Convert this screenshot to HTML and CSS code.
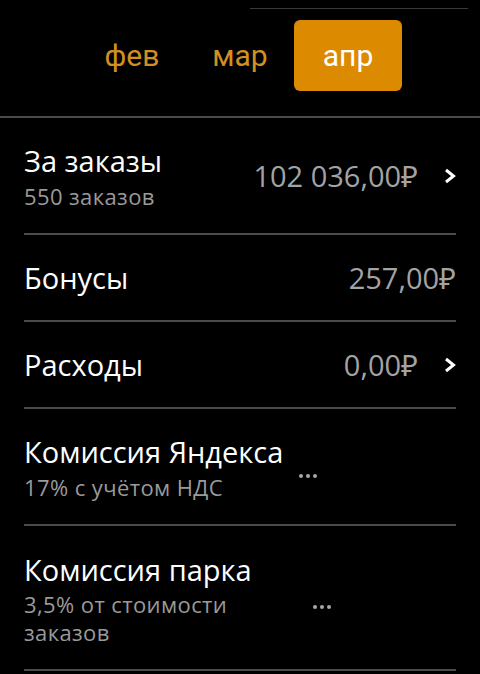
FILE: index.html
```html
<!DOCTYPE html>
<html lang="ru">
<head>
    <meta charset="UTF-8">
    <title>Доходы</title>
    <link rel="stylesheet" href="styles.css">
</head>
<body>
    <div class="top-line"></div>

    <!-- Месяцы -->
    <div class="months">
        <div class="month">фев</div>
        <div class="month">мар</div>
        <div class="month active">апр</div>
    </div>

    <div class="list">
        <div class="row row-big">
            <div class="info">
                <div class="title">За заказы</div>
                <div class="sub">550 заказов</div>
            </div>
            <div class="value">102 036,00₽</div>
            <svg class="chevron" width="12" height="16" viewBox="0 0 12 16"><polyline points="2,2 9.5,8 2,14" fill="none" stroke="#fff" stroke-width="3"/></svg>
        </div>
        <div class="row">
            <div class="info">
                <div class="title">Бонусы</div>
            </div>
            <div class="value">257,00₽</div>
        </div>
        <div class="row">
            <div class="info">
                <div class="title">Расходы</div>
            </div>
            <div class="value">0,00₽</div>
            <svg class="chevron" width="12" height="16" viewBox="0 0 12 16"><polyline points="2,2 9.5,8 2,14" fill="none" stroke="#fff" stroke-width="3"/></svg>
        </div>
        <div class="row row-big">
            <div class="info info-yandex">
                <div class="title">Комиссия Яндекса</div>
                <div class="sub">17% с учётом НДС</div>
            </div>
            <div class="dots"><span></span><span></span><span></span></div>
        </div>
        <div class="row row-park">
            <div class="info info-park">
                <div class="title">Комиссия парка</div>
                <div class="sub sub-narrow">3,5% от стоимости заказов</div>
            </div>
            <div class="dots"><span></span><span></span><span></span></div>
        </div>
    </div>
</body>
</html>
```

FILE: styles.css
```css
body {
    margin: 0;
    background: #000;
    color: #fff;
    font-family: "Open Sans", "Noto Sans", sans-serif;
}
.top-line {
    margin: 8px 0 0 250px;
    width: 218px;
    height: 1px;
    background: #3a3a3a;
}
.months {
    display: flex;
    justify-content: flex-end;
    padding-right: 78px;
    margin-top: 11px;
    padding-bottom: 25px;
    border-bottom: 2px solid #4b4b4b;
}
.month {
    width: 108px;
    height: 71px;
    display: flex;
    align-items: center;
    justify-content: center;
    font-family: Roboto, sans-serif;
    font-size: 30px;
    color: #d28f22;
    border-radius: 6px;
}
.month.active {
    background: #dc8a00;
    color: #fff;
}
.list {
    padding: 0 24px;
}
.row {
    display: flex;
    align-items: center;
    height: 85px;
    border-bottom: 2px solid #4b4b4b;
}
.row-big {
    height: 115px;
}
.row-park {
    height: 143px;
}
.info {
    flex: 1;
}
.info-yandex {
    flex: 0 0 275px;
}
.info-park {
    flex: 0 0 289px;
}
.title {
    font-size: 29px;
    line-height: 40px;
}
.sub {
    font-size: 22px;
    letter-spacing: 0.4px;
    line-height: 30px;
    color: #9a9a9a;
}
.sub-narrow {
    max-width: 215px;
    line-height: 28px;
}
.value {
    font-size: 29px;
    color: #a3a3a3;
}
.chevron {
    margin-left: 26px;
}
.dots {
    display: flex;
    gap: 3px;
    margin-top: 18px;
}
.dots span {
    width: 4px;
    height: 4px;
    border-radius: 50%;
    background: #a8a8a8;
}
```
